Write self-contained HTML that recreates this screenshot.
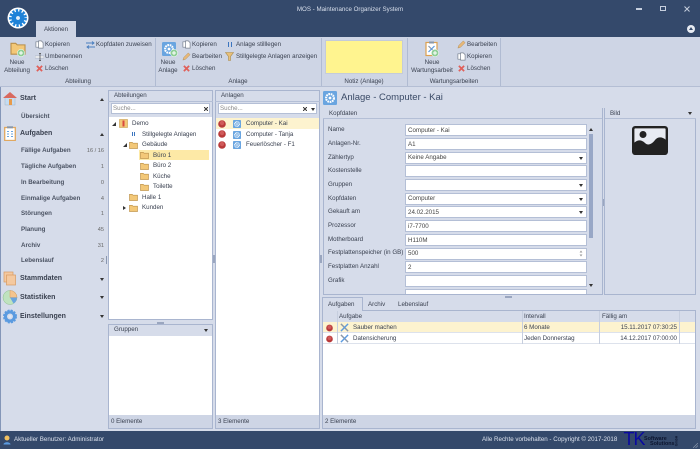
<!DOCTYPE html>
<html><head><meta charset="utf-8"><style>
html,body{margin:0;padding:0;width:700px;height:449px;overflow:hidden;background:#d6dcea}
body{position:relative;font-family:"Liberation Sans",sans-serif;font-size:6.2px;color:#3a4150;filter:blur(.3px)}
div,span,svg{position:absolute}
.t{white-space:nowrap;line-height:10px;height:10px}
.c{transform:translateX(-50%)}
.b{font-weight:bold}
.p{background:#d6dcea;border:1px solid #a9b5cf;box-sizing:border-box}
.f{background:#ced5e5}
.w{background:#fff}
.i{background:#fff;border:1px solid #b4bfd6;box-sizing:border-box;left:405px;width:182px;height:12px}
.i2{left:2px;top:0.5px;line-height:10px;white-space:nowrap;color:#444}
.d{width:0;height:0;border-left:2.5px solid transparent;border-right:2.5px solid transparent;border-top:3px solid #333}
.u{width:0;height:0;border-left:2.5px solid transparent;border-right:2.5px solid transparent;border-bottom:3px solid #333}
.n{right:596px;text-align:right;color:#666;font-size:5.6px}
.s{font-size:6.2px;font-weight:bold;color:#4a5262}
</style></head><body>
<svg width="0" height="0" style="left:0;top:0">
<defs>
<symbol id="folder" viewBox="0 0 10 9"><path d="M.5 1.5h3l1 1h5v6h-9z" fill="#f3c878" stroke="#b98f4a" stroke-width=".7"/></symbol>
<symbol id="copy" viewBox="0 0 10 10"><path d="M1 2h4v6H1z" fill="#fff" stroke="#7a8290" stroke-width=".8"/><path d="M4 1h3l2 2v6H4z" fill="#fff" stroke="#7a8290" stroke-width=".8"/></symbol>
<symbol id="x" viewBox="0 0 8 8"><path d="M1 1l6 6M7 1L1 7" stroke="#e0605a" stroke-width="2"/></symbol>
<symbol id="pen" viewBox="0 0 10 10"><path d="M1 9l1-3 5-5 2 2-5 5z" fill="#e8b878" stroke="#a98a5a" stroke-width=".5"/></symbol>
<symbol id="plus" viewBox="0 0 8 8"><circle cx="4" cy="4" r="3.7" fill="#8fcf97" stroke="#fff" stroke-width=".5"/><path d="M4 2v4M2 4h4" stroke="#fff" stroke-width="1"/></symbol>
<symbol id="gear" viewBox="0 0 10 10"><rect width="10" height="10" rx="1" fill="#6aa5e0"/><circle cx="5" cy="5" r="2.8" fill="none" stroke="#fff" stroke-width="1.5" stroke-dasharray="1.2 .5"/><circle cx="5" cy="5" r="1" fill="#fff"/></symbol>
<symbol id="dot" viewBox="0 0 8 8"><circle cx="4" cy="4" r="3.8" fill="#b93a3a"/><circle cx="4" cy="3" r="2.2" fill="#d05a5a"/></symbol>
<symbol id="tool" viewBox="0 0 10 10"><path d="M1 1l8 8" stroke="#8a97a8" stroke-width="1.6"/><path d="M9 1L1 9" stroke="#5b9be0" stroke-width="1.6"/></symbol>
</defs></svg>

<!-- title bar -->
<div style="left:0;top:0;width:700px;height:37px;background:#34496b"></div>
<svg style="left:7px;top:7px" width="22" height="22" viewBox="0 0 22 22"><circle cx="11" cy="11" r="10.5" fill="#fff"/><circle cx="11" cy="11" r="4.2" fill="none" stroke="#1e82d8" stroke-width="4.600"/><circle cx="11" cy="11" r="7.600" fill="none" stroke="#1e82d8" stroke-width="2.600" stroke-dasharray="2.400 1.300"/><circle cx="11" cy="11" r="1.500" fill="#e6f0fa"/></svg>
<div class="t c" style="left:350px;top:5px;color:#d8dfec">MOS - Maintenance Organizer System</div>
<div style="left:636px;top:8px;width:6px;height:1.5px;background:#c6cfde"></div>
<div style="left:660px;top:6px;width:6px;height:5px;border:1px solid #c6cfde;box-sizing:border-box"></div>
<svg style="left:684px;top:6px" width="6" height="6" viewBox="0 0 6 6"><path d="M.5.5l5 5M5.5.5l-5 5" stroke="#c6cfde" stroke-width="1"/></svg>
<div style="left:687px;top:25px;width:8px;height:8px;border-radius:50%;background:#e8ecf3"></div>
<div class="u" style="left:688.5px;top:27px;border-bottom-color:#34496b"></div>
<div style="left:36px;top:21px;width:40px;height:17px;background:#ced5e5"></div>
<div class="t c" style="left:56px;top:25px">Aktionen</div>

<!-- ribbon -->
<div style="left:0;top:37px;width:700px;height:50px;background:#ced5e5;border-bottom:1px solid #b4bed4;box-sizing:border-box"></div>
<div style="left:155px;top:38px;width:1px;height:48px;background:#b0bbd2"></div>
<div style="left:321px;top:38px;width:1px;height:48px;background:#b0bbd2"></div>
<div style="left:407px;top:38px;width:1px;height:48px;background:#b0bbd2"></div>
<div style="left:500px;top:38px;width:1px;height:48px;background:#b0bbd2"></div>
<div style="left:325px;top:40px;width:78px;height:34px;background:#fff48f;border:1px solid #c4cbd9;box-sizing:border-box"></div>

<svg style="left:10px;top:41px" width="16" height="14"><use href="#folder" width="16" height="14"/></svg>
<svg style="left:17px;top:49px" width="8" height="8"><use href="#plus" width="8" height="8"/></svg>
<div class="t c" style="left:17px;top:58px">Neue</div>
<div class="t c" style="left:17px;top:66px">Abteilung</div>
<svg style="left:35px;top:40px" width="9" height="9"><use href="#copy" width="9" height="9"/></svg>
<div class="t" style="left:45px;top:40px">Kopieren</div>
<svg style="left:35px;top:53px" width="9" height="8" viewBox="0 0 9 8"><path d="M0 3h9v2H0z" fill="#fff" stroke="#9aa3b2" stroke-width=".5"/><path d="M5 .5v7M4 .5h2M4 7.5h2" stroke="#444" stroke-width=".7"/></svg>
<div class="t" style="left:45px;top:52px">Umbenennen</div>
<svg style="left:36px;top:65px" width="7" height="7"><use href="#x" width="7" height="7"/></svg>
<div class="t" style="left:45px;top:64px">Löschen</div>
<svg style="left:86px;top:41px" width="9" height="8" viewBox="0 0 9 8"><path d="M0 2h8M6 .5L8 2 6 3.5" stroke="#4a7fc0" fill="none" stroke-width=".9"/><path d="M9 6H1M3 4.5L1 6l2 1.5" stroke="#4a7fc0" fill="none" stroke-width=".9"/></svg>
<div class="t" style="left:96px;top:40px">Kopfdaten zuweisen</div>
<div class="t c" style="left:78px;top:76.500px">Abteilung</div>

<svg style="left:162px;top:42px" width="14" height="14"><use href="#gear" width="14" height="14"/></svg>
<svg style="left:170px;top:49px" width="8" height="8"><use href="#plus" width="8" height="8"/></svg>
<div class="t c" style="left:168px;top:58px">Neue</div>
<div class="t c" style="left:168px;top:66px">Anlage</div>
<svg style="left:182px;top:40px" width="9" height="9"><use href="#copy" width="9" height="9"/></svg>
<div class="t" style="left:192px;top:40px">Kopieren</div>
<svg style="left:182px;top:52px" width="9" height="9"><use href="#pen" width="9" height="9"/></svg>
<div class="t" style="left:192px;top:52px">Bearbeiten</div>
<svg style="left:183px;top:65px" width="7" height="7"><use href="#x" width="7" height="7"/></svg>
<div class="t" style="left:192px;top:64px">Löschen</div>
<div style="left:228px;top:42px;width:1px;height:5px;background:#3b75bf"></div>
<div style="left:231px;top:42px;width:1px;height:5px;background:#3b75bf"></div>
<div class="t" style="left:236px;top:40px">Anlage stilllegen</div>
<svg style="left:225px;top:52px" width="9" height="9" viewBox="0 0 9 9"><path d="M.5.5h8L5.5 4.500V8.500h-2V4.500z" fill="#e8c07a" stroke="#a98a4a" stroke-width=".6"/></svg>
<div class="t" style="left:236px;top:52px">Stillgelegte Anlagen anzeigen</div>
<div class="t c" style="left:238px;top:76.500px">Anlage</div>

<div class="t c" style="left:364px;top:76.500px">Notiz (Anlage)</div>

<svg style="left:425px;top:41px" width="14" height="16" viewBox="0 0 14 16"><rect x="1" y="1.500" width="11" height="13" fill="#fff" stroke="#dca050" stroke-width="1.2"/><rect x="4" y=".5" width="5" height="2" fill="#8a97a8"/><path d="M3.500 5l6 6" stroke="#8a97a8" stroke-width="1.2"/><path d="M9.500 5l-6 6" stroke="#5b9be0" stroke-width="1.2"/></svg>
<svg style="left:431px;top:49px" width="8" height="8"><use href="#plus" width="8" height="8"/></svg>
<div class="t c" style="left:432px;top:58px">Neue</div>
<div class="t c" style="left:432px;top:66px">Wartungsarbeit</div>
<svg style="left:457px;top:40px" width="9" height="9"><use href="#pen" width="9" height="9"/></svg>
<div class="t" style="left:467px;top:40px">Bearbeiten</div>
<svg style="left:457px;top:52px" width="9" height="9"><use href="#copy" width="9" height="9"/></svg>
<div class="t" style="left:467px;top:52px">Kopieren</div>
<svg style="left:458px;top:65px" width="7" height="7"><use href="#x" width="7" height="7"/></svg>
<div class="t" style="left:467px;top:64px">Löschen</div>
<div class="t c" style="left:454px;top:76.500px">Wartungsarbeiten</div>

<!-- sidebar -->
<div style="left:0;top:87px;width:1px;height:344px;background:#8496b8"></div>
<svg style="left:3px;top:91px" width="14" height="15" viewBox="0 0 14 15"><rect x="2" y="6" width="10" height="8" fill="#c5dcf2" stroke="#9ab" stroke-width=".4"/><path d="M0 7l7-6 7 6z" fill="#d9695f"/><rect x="6" y="8" width="3" height="6" fill="#e89a4a"/></svg>
<div class="t b" style="left:20px;top:94px;font-size:7px">Start</div>
<div class="u" style="left:99.500px;top:98px"></div>
<div class="t s" style="left:21px;top:111.500px">Übersicht</div>
<svg style="left:4px;top:126px" width="12" height="15" viewBox="0 0 12 15"><rect x=".7" y="1.500" width="10.600" height="13" fill="#fff" stroke="#e0a860" stroke-width="1.300"/><rect x="3" y=".3" width="6" height="2" fill="#8a97a8"/><path d="M3 5.500h2M7 5.500h2M3 8h2M7 8h2M3 10.500h2M7 10.500h2" stroke="#6aa5e0" stroke-width="1"/></svg>
<div class="t b" style="left:20px;top:129px;font-size:7px">Aufgaben</div>
<div class="u" style="left:99.500px;top:133px"></div>
<div class="t s" style="left:21px;top:146px">Fällige Aufgaben</div><div class="t n" style="top:146px">16 / 16</div>
<div class="t s" style="left:21px;top:162px">Tägliche Aufgaben</div><div class="t n" style="top:162px">1</div>
<div class="t s" style="left:21px;top:178px">In Bearbeitung</div><div class="t n" style="top:178px">0</div>
<div class="t s" style="left:21px;top:193.500px">Einmalige Aufgaben</div><div class="t n" style="top:193.500px">4</div>
<div class="t s" style="left:21px;top:209px">Störungen</div><div class="t n" style="top:209px">1</div>
<div class="t s" style="left:21px;top:225px">Planung</div><div class="t n" style="top:225px">45</div>
<div class="t s" style="left:21px;top:240.500px">Archiv</div><div class="t n" style="top:240.500px">31</div>
<div class="t s" style="left:21px;top:256px">Lebenslauf</div><div class="t n" style="top:256px">2</div>
<svg style="left:3px;top:271px" width="14" height="15" viewBox="0 0 14 15"><rect x="1" y="1" width="9" height="10" fill="#f4c9a0" stroke="#d89a60" stroke-width=".7"/><rect x="3.500" y="4" width="9" height="10" fill="#f4c9a0" stroke="#d89a60" stroke-width=".7"/></svg>
<div class="t b" style="left:20px;top:274px;font-size:7px">Stammdaten</div>
<div class="d" style="left:99.500px;top:278px"></div>
<svg style="left:2px;top:290px" width="16" height="15" viewBox="0 0 16 15"><circle cx="8" cy="7.500" r="7" fill="#bfe3bf" stroke="#8fbf8f" stroke-width=".5"/><path d="M8 7.500V.5A7 7 0 0 1 15 7.500z" fill="#f4c48e" stroke="#d89a60" stroke-width=".5"/><path d="M8 7.500h7A7 7 0 0 1 11.500 13.500z" fill="#6aa5e0"/></svg>
<div class="t b" style="left:20px;top:292.500px;font-size:7px">Statistiken</div>
<div class="d" style="left:99.500px;top:296px"></div>
<svg style="left:3px;top:309px" width="14" height="15" viewBox="0 0 14 15"><circle cx="7" cy="7.500" r="4.500" fill="none" stroke="#5b9be0" stroke-width="3"/><circle cx="7" cy="7.500" r="6" fill="none" stroke="#5b9be0" stroke-width="2" stroke-dasharray="2 1.200"/><circle cx="7" cy="7.500" r="1.500" fill="#dfe8f5"/></svg>
<div class="t b" style="left:20px;top:311.500px;font-size:7px">Einstellungen</div>
<div class="d" style="left:99.500px;top:315px"></div>
<div style="left:106px;top:256px;width:1px;height:8px;background:#8a97b0"></div>

<!-- Abteilungen -->
<div class="p" style="left:108px;top:90px;width:105px;height:230px"></div>
<div style="left:108px;top:101px;width:105px;height:1px;background:#b4bfd6"></div>
<div class="t" style="left:114px;top:91px">Abteilungen</div>
<div class="w" style="left:111px;top:103px;width:99px;height:11px;border:1px solid #b4bfd6;box-sizing:border-box"></div>
<div class="t" style="left:113px;top:103.500px;color:#888">Suche...</div>
<svg style="left:204px;top:107px" width="4" height="4" viewBox="0 0 4 4"><path d="M0 0l4 4M4 0L0 4" stroke="#333" stroke-width="1"/></svg>
<div class="w" style="left:109px;top:117px;width:103px;height:202px"></div>
<div style="left:139px;top:150px;width:70px;height:10px;background:#fde9a6"></div>
<svg style="left:112px;top:122px" width="4" height="4" viewBox="0 0 4 4"><path d="M4 0v4H0z" fill="#333"/></svg>
<svg style="left:119px;top:119px" width="9" height="9" viewBox="0 0 9 9"><rect x=".5" y=".5" width="8" height="8" fill="#f3c878" stroke="#c9a050" stroke-width=".6"/><path d="M4.500 1.500v6" stroke="#d9493f" stroke-width="2"/></svg>
<div class="t" style="left:132px;top:119px">Demo</div>
<div style="left:132px;top:131.500px;width:1px;height:4px;background:#3b75bf"></div>
<div style="left:134px;top:131.500px;width:1px;height:4px;background:#3b75bf"></div>
<div class="t" style="left:142px;top:129.500px">Stillgelegte Anlagen</div>
<svg style="left:122.500px;top:143px" width="4" height="4" viewBox="0 0 4 4"><path d="M4 0v4H0z" fill="#333"/></svg>
<svg style="left:129px;top:141px" width="9" height="8"><use href="#folder" width="9" height="8"/></svg>
<div class="t" style="left:142px;top:140px">Gebäude</div>
<svg style="left:140px;top:151px" width="9" height="8"><use href="#folder" width="9" height="8"/></svg><div class="t" style="left:153px;top:150.500px">Büro 1</div>
<svg style="left:140px;top:161.500px" width="9" height="8"><use href="#folder" width="9" height="8"/></svg><div class="t" style="left:153px;top:161px">Büro 2</div>
<svg style="left:140px;top:172px" width="9" height="8"><use href="#folder" width="9" height="8"/></svg><div class="t" style="left:153px;top:171.500px">Küche</div>
<svg style="left:140px;top:182.500px" width="9" height="8"><use href="#folder" width="9" height="8"/></svg><div class="t" style="left:153px;top:182px">Toilette</div>
<svg style="left:129px;top:193px" width="9" height="8"><use href="#folder" width="9" height="8"/></svg><div class="t" style="left:142px;top:192.500px">Halle 1</div>
<svg style="left:123px;top:206px" width="3" height="4" viewBox="0 0 3 4"><path d="M0 0l3 2-3 2z" fill="#333"/></svg>
<svg style="left:129px;top:203.500px" width="9" height="8"><use href="#folder" width="9" height="8"/></svg><div class="t" style="left:142px;top:203px">Kunden</div>
<div style="left:157px;top:322px;width:7px;height:1.500px;background:#9aa6bf"></div>

<!-- Gruppen -->
<div class="p" style="left:108px;top:324px;width:105px;height:105px"></div>
<div class="t" style="left:114px;top:325px">Gruppen</div>
<div class="d" style="left:204px;top:329px"></div>
<div class="w" style="left:109px;top:336px;width:103px;height:79px"></div>
<div class="f" style="left:109px;top:415px;width:103px;height:13px"></div>
<div class="t" style="left:111px;top:417px">0 Elemente</div>
<div style="left:213px;top:255px;width:1.500px;height:8px;background:#9aa6bf"></div>

<!-- Anlagen -->
<div class="p" style="left:215px;top:90px;width:105px;height:339px"></div>
<div style="left:215px;top:101px;width:105px;height:1px;background:#b4bfd6"></div>
<div class="t" style="left:221px;top:91px">Anlagen</div>
<div class="w" style="left:218px;top:103px;width:99px;height:11px;border:1px solid #b4bfd6;box-sizing:border-box"></div>
<div class="t" style="left:220px;top:103.500px;color:#888">Suche...</div>
<svg style="left:303px;top:107px" width="4" height="4" viewBox="0 0 4 4"><path d="M0 0l4 4M4 0L0 4" stroke="#333" stroke-width="1"/></svg>
<div class="d" style="left:311px;top:108px"></div>
<div class="w" style="left:216px;top:118px;width:103px;height:297px"></div>
<div style="left:216px;top:118px;width:103px;height:11px;background:#fdf3cf"></div>
<svg style="left:218px;top:119.500px" width="8" height="8"><use href="#dot" width="8" height="8"/></svg>
<svg style="left:233px;top:120px" width="8" height="8"><use href="#gear" width="8" height="8"/></svg>
<div class="t" style="left:246px;top:119px">Computer - Kai</div>
<svg style="left:218px;top:130px" width="8" height="8"><use href="#dot" width="8" height="8"/></svg>
<svg style="left:233px;top:130.500px" width="8" height="8"><use href="#gear" width="8" height="8"/></svg>
<div class="t" style="left:246px;top:129.500px">Computer - Tanja</div>
<svg style="left:218px;top:140.500px" width="8" height="8"><use href="#dot" width="8" height="8"/></svg>
<svg style="left:233px;top:141px" width="8" height="8"><use href="#gear" width="8" height="8"/></svg>
<div class="t" style="left:246px;top:140px">Feuerlöscher - F1</div>
<div class="f" style="left:216px;top:415px;width:103px;height:13px"></div>
<div class="t" style="left:218px;top:417px">3 Elemente</div>
<div style="left:320px;top:255px;width:1.500px;height:8px;background:#9aa6bf"></div>

<!-- Detail head -->
<svg style="left:323px;top:91px" width="14" height="14"><use href="#gear" width="14" height="14"/></svg>
<div class="t" style="left:341px;top:93px;font-size:9.500px;color:#3a4a66">Anlage - Computer - Kai</div>

<!-- Kopfdaten -->
<div style="left:322.500px;top:108px;width:280px;height:187px;border:1px solid #a9b5cf;box-sizing:border-box"></div>
<div style="left:323px;top:108px;width:279px;height:11px;background:#d6dcea;border-bottom:1px solid #b4bfd6;box-sizing:border-box"></div>
<div class="t" style="left:329px;top:108.500px">Kopfdaten</div>
<div class="t" style="left:328px;top:125px">Name</div>
<div class="t" style="left:328px;top:139px">Anlagen-Nr.</div>
<div class="t" style="left:328px;top:152.500px">Zählertyp</div>
<div class="t" style="left:328px;top:166px">Kostenstelle</div>
<div class="t" style="left:328px;top:180px">Gruppen</div>
<div class="t" style="left:328px;top:193.500px">Kopfdaten</div>
<div class="t" style="left:328px;top:207px">Gekauft am</div>
<div class="t" style="left:328px;top:221px">Prozessor</div>
<div class="t" style="left:328px;top:235px">Motherboard</div>
<div class="t" style="left:328px;top:248px">Festplattenspeicher (in GB)</div>
<div class="t" style="left:328px;top:262px">Festplatten Anzahl</div>
<div class="t" style="left:328px;top:276px">Grafik</div>

<div class="i" style="top:124px"><span class="i2">Computer - Kai</span></div>
<div class="i" style="top:138px"><span class="i2">A1</span></div>
<div class="i" style="top:151.500px"><span class="i2">Keine Angabe</span><div class="d" style="right:3px;top:4px"></div></div>
<div class="i" style="top:165px"></div>
<div class="i" style="top:179px"><div class="d" style="right:3px;top:4px"></div></div>
<div class="i" style="top:192.500px"><span class="i2">Computer</span><div class="d" style="right:3px;top:4px"></div></div>
<div class="i" style="top:206px"><span class="i2">24.02.2015</span><div class="d" style="right:3px;top:4px"></div></div>
<div class="i" style="top:220px"><span class="i2">i7-7700</span></div>
<div class="i" style="top:234px"><span class="i2">H110M</span></div>
<div class="i" style="top:247.500px"><span class="i2">500</span><div class="u" style="right:3px;top:1.500px;border-bottom-color:#999;transform:scale(.7)"></div><div class="d" style="right:3px;top:5.500px;border-top-color:#999;transform:scale(.7)"></div></div>
<div class="i" style="top:261px"><span class="i2">2</span></div>
<div class="i" style="top:275px"></div>
<div class="i" style="top:288.500px;height:5px;border-bottom:0"></div>
<div class="u" style="left:588.500px;top:127.500px"></div>
<div style="left:589px;top:134px;width:4px;height:104px;background:#98a7c6"></div>
<div class="d" style="left:588.500px;top:284px"></div>
<div style="left:602.500px;top:199px;width:1.500px;height:7px;background:#9aa6bf"></div>

<!-- Bild -->
<div style="left:604px;top:108px;width:92px;height:187px;border:1px solid #a9b5cf;box-sizing:border-box"></div>
<div style="left:604.500px;top:108px;width:91px;height:11px;background:#d6dcea;border-bottom:1px solid #b4bfd6;box-sizing:border-box"></div>
<div class="t" style="left:610px;top:108.500px">Bild</div>
<div class="d" style="left:688px;top:112px"></div>
<svg style="left:632px;top:126px" width="36" height="29" viewBox="0 0 36 29"><rect x="1.200" y="1.200" width="33.600" height="26.600" rx="2" fill="#e8ebf2" stroke="#222" stroke-width="2.400"/><circle cx="11" cy="8.500" r="3.500" fill="#222"/><path d="M2 17c4-4 8-3 11 0s7 1 10-3 8-3 11 0v13H2z" fill="#222"/></svg>

<div style="left:505px;top:296px;width:7px;height:1.500px;background:#9aa6bf"></div>

<!-- bottom tabs -->
<div class="p" style="left:322px;top:310px;width:374px;height:119px"></div>
<div style="left:322px;top:297px;width:41px;height:14px;background:#d6dcea;border:1px solid #a9b5cf;border-bottom:0;box-sizing:border-box"></div>
<div class="t" style="left:328px;top:300px">Aufgaben</div>
<div class="t" style="left:368px;top:300px">Archiv</div>
<div class="t" style="left:398px;top:300px">Lebenslauf</div>
<div class="t" style="left:339px;top:311.500px">Aufgabe</div>
<div class="t" style="left:524px;top:311.500px">Intervall</div>
<div class="t" style="left:602px;top:311.500px">Fällig am</div>
<div class="w" style="left:323px;top:322px;width:372px;height:93px"></div>
<div class="f" style="left:323px;top:415px;width:372px;height:13px"></div>
<div style="left:323px;top:322px;width:372px;height:11px;background:#fdf3cf;border-bottom:1px solid #dde2ec;box-sizing:border-box"></div>
<div style="left:323px;top:333px;width:372px;height:11px;border-bottom:1px solid #dde2ec;box-sizing:border-box"></div>
<div style="left:337px;top:311px;width:1px;height:33px;background:#c6cede"></div>
<div style="left:521.500px;top:311px;width:1px;height:33px;background:#c6cede"></div>
<div style="left:599px;top:311px;width:1px;height:33px;background:#c6cede"></div>
<div style="left:679px;top:311px;width:1px;height:33px;background:#c6cede"></div>
<svg style="left:326px;top:323.500px" width="7" height="8"><use href="#dot" width="7" height="8"/></svg>
<svg style="left:340px;top:323px" width="9" height="9"><use href="#tool" width="9" height="9"/></svg>
<div class="t" style="left:353px;top:322.500px">Sauber machen</div>
<div class="t" style="left:524px;top:322.500px">6 Monate</div>
<div class="t" style="right:23px;top:322.500px">15.11.2017 07:30:25</div>
<svg style="left:326px;top:334.500px" width="7" height="8"><use href="#dot" width="7" height="8"/></svg>
<svg style="left:340px;top:334px" width="9" height="9"><use href="#tool" width="9" height="9"/></svg>
<div class="t" style="left:353px;top:333.500px">Datensicherung</div>
<div class="t" style="left:524px;top:333.500px">Jeden Donnerstag</div>
<div class="t" style="right:23px;top:333.500px">14.12.2017 07:00:00</div>
<div class="t" style="left:325px;top:417px">2 Elemente</div>

<!-- status -->
<div style="left:0;top:431px;width:700px;height:18px;background:#34496b"></div>
<svg style="left:3px;top:435px" width="8" height="10" viewBox="0 0 8 10"><circle cx="4" cy="3" r="2.500" fill="#f0c060"/><path d="M.5 9.500c0-3 7-3 7 0z" fill="#5b9be0"/></svg>
<div class="t" style="left:14px;top:435px;color:#dbe1ec">Aktueller Benutzer: Administrator</div>
<div class="t" style="left:482px;top:435px;color:#dbe1ec">Alle Rechte vorbehalten - Copyright © 2017-2018</div>
<div class="t" style="left:623.500px;top:432px;font-size:18px;height:15px;line-height:15px;color:#0a0aa0;letter-spacing:-1px">TK</div>
<div class="t b" style="left:644px;top:434px;font-size:5.400px;color:#0d1630">Software</div>
<div class="t b" style="left:650px;top:439px;font-size:5.400px;color:#0d1630">Solutions</div>
<div class="t b" style="left:671px;top:436px;font-size:3.500px;color:#0d1630;transform:rotate(-90deg)">GmbH</div>
<svg style="left:693px;top:443px" width="5" height="5" viewBox="0 0 5 5"><path d="M0 5l5-5M2.500 5L5 2.500" stroke="#8a97ac" stroke-width=".7"/></svg>
</body></html>
